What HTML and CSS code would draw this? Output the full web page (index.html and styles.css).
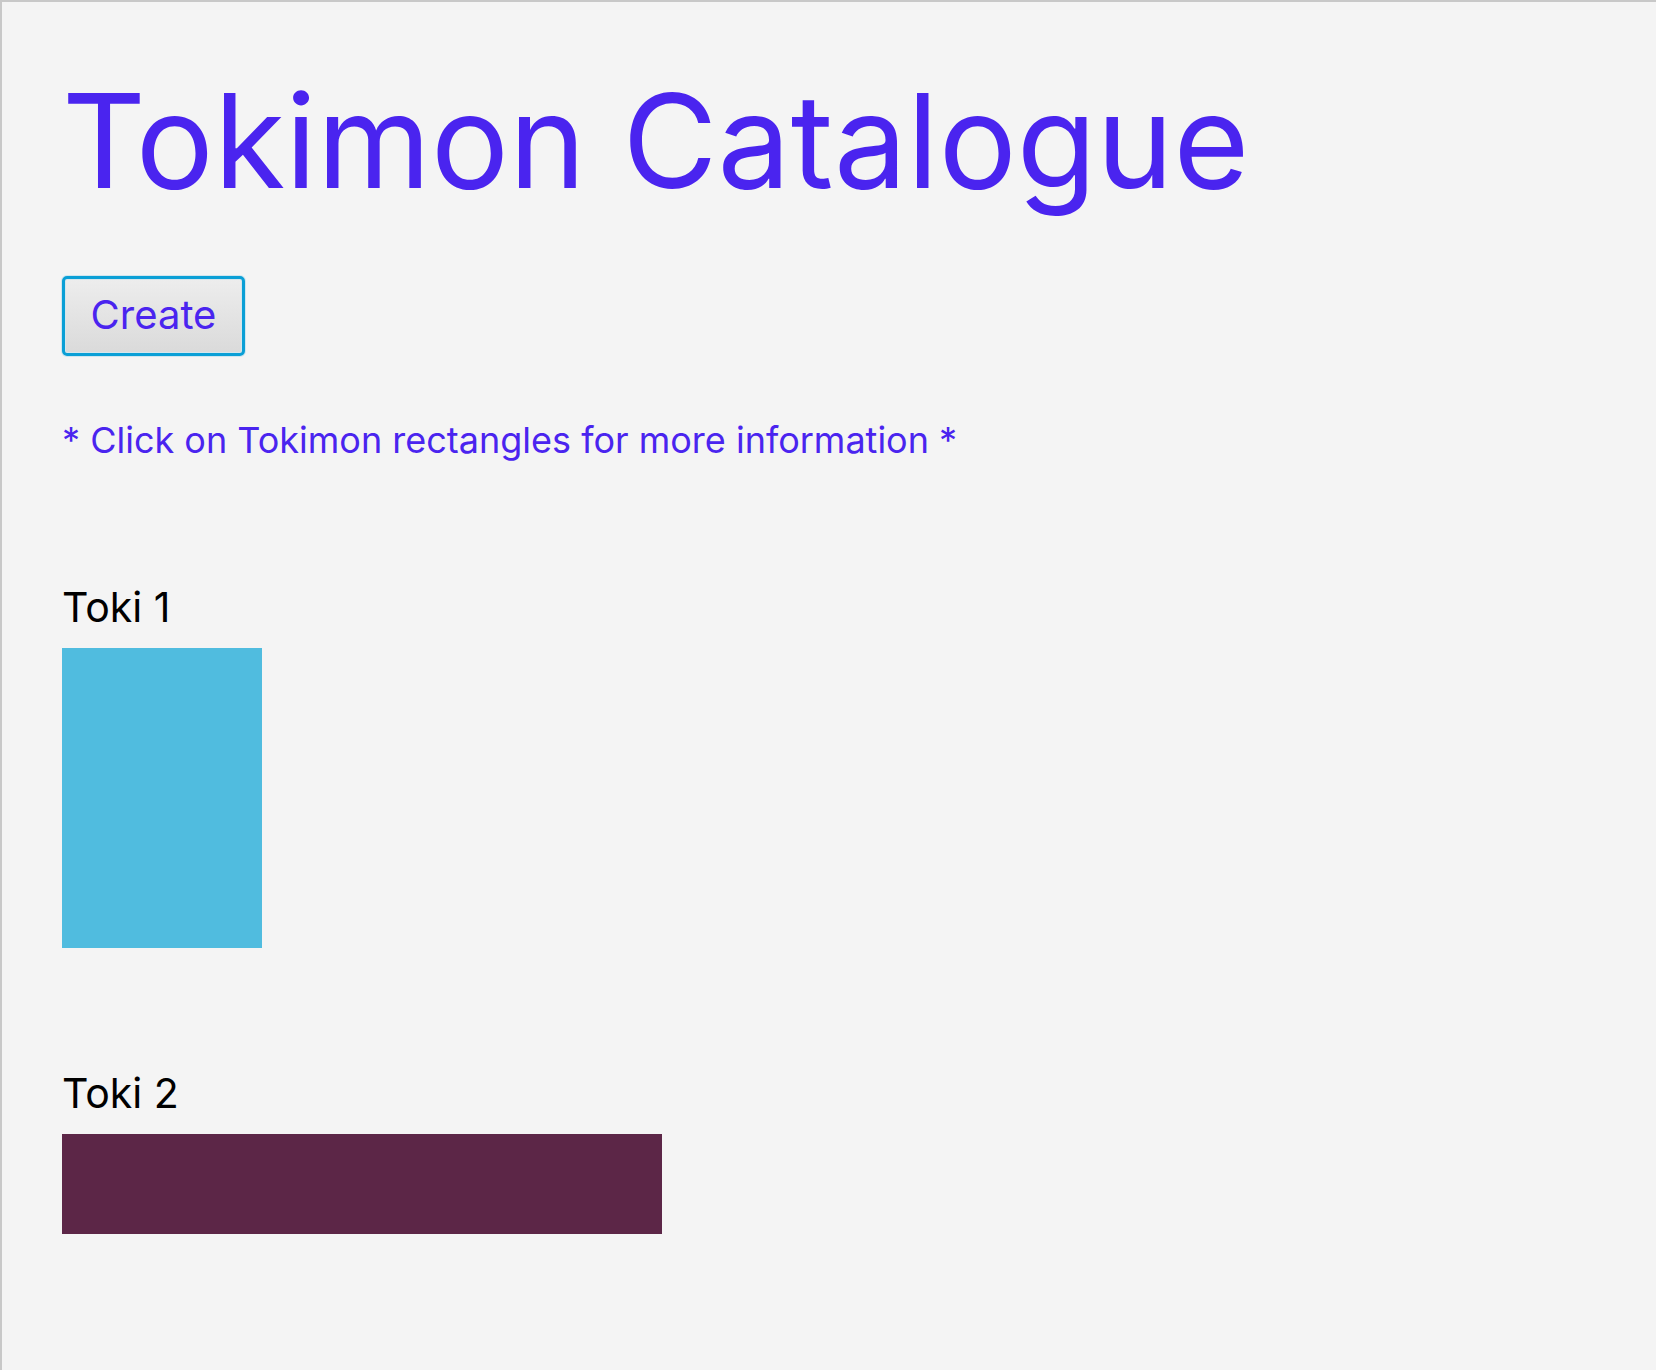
FILE: index.html
```html
<!DOCTYPE html>
<html lang="en">
<head>
<meta charset="utf-8">
<title>Tokimon Catalogue</title>
<link rel="stylesheet" href="styles.css">
</head>
<body>
<main class="window">
  <h1 class="title">Tokimon Catalogue</h1>
  <button class="create-btn" type="button">Create</button>
  <p class="hint">* Click on Tokimon rectangles for more information *</p>
  <section class="toki-list">
    <div class="toki">
      <div class="toki-name">Toki 1</div>
      <div class="toki-rect toki-rect--one"></div>
    </div>
    <div class="toki">
      <div class="toki-name">Toki 2</div>
      <div class="toki-rect toki-rect--two"></div>
    </div>
  </section>
</main>
</body>
</html>
```

FILE: styles.css
```css
html, body {
  margin: 0;
  padding: 0;
  height: 100%;
}

body {
  background: #f4f4f4;
  font-family: Inter, "Noto Sans", "Liberation Sans", sans-serif;
}

.window {
  box-sizing: border-box;
  min-height: 100%;
  border-top: 2px solid #c8c8c8;
  border-left: 2px solid #c8c8c8;
  padding: 74px 0 0 60px;
  display: flex;
  flex-direction: column;
  align-items: flex-start;
}

.title {
  margin: 0;
  font-size: 130px;
  line-height: 130px;
  font-weight: 400;
  color: #4a24ef;
  letter-spacing: 0.1px;
}

.create-btn {
  box-sizing: border-box;
  margin: 70px 0 0 0;
  width: 183px;
  height: 80px;
  padding: 0 0 2px 0;
  border: 3px solid #0a9fd6;
  border-radius: 5px;
  background: linear-gradient(#ededed, #dadada);
  box-shadow: 0 0 0 1px #cfe6ef, inset 0 0 0 1px #d4e6ec;
  font-family: inherit;
  font-size: 40px;
  line-height: 40px;
  color: #4a24ef;
  display: flex;
  align-items: center;
  justify-content: center;
}

.hint {
  margin: 66px 0 0 0;
  font-size: 36px;
  line-height: 36px;
  color: #4a24ef;
}

.toki-list {
  margin-top: 129px;
  display: flex;
  flex-direction: column;
  gap: 125px;
}

.toki {
  display: flex;
  flex-direction: column;
  gap: 21px;
}

.toki-name {
  font-size: 41px;
  line-height: 40px;
  color: #000;
}

.toki-rect--one {
  width: 200px;
  height: 300px;
  background: #50bcdf;
}

.toki-rect--two {
  width: 600px;
  height: 100px;
  background: #5c2647;
}
```
